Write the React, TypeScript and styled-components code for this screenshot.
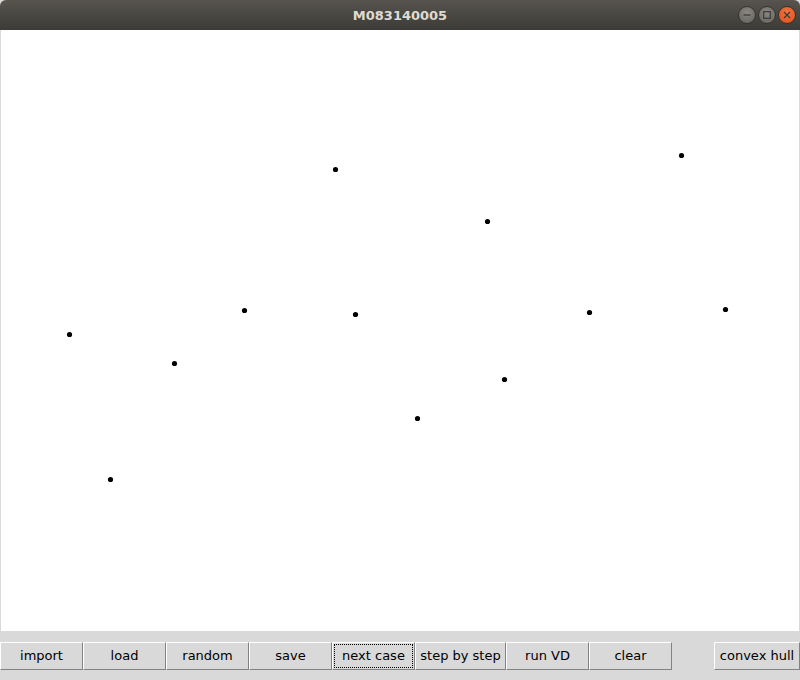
import styled, { createGlobalStyle } from 'styled-components';

const GlobalStyle = createGlobalStyle`
html, body {
  margin: 0;
  padding: 0;
  background: #d9d9d9;
}
`

const points: [number, number][] = [
  [335, 169], [681, 155], [487, 221], [69, 334], [244, 310], [355, 314],
  [589, 312], [725, 309], [174, 363], [504, 379], [417, 418], [110, 479],
]

const buttons = [
  { label: 'import', width: 83 },
  { label: 'load', width: 83 },
  { label: 'random', width: 83 },
  { label: 'save', width: 83 },
  { label: 'next case', width: 83, focused: true },
  { label: 'step by step', width: 91 },
  { label: 'run VD', width: 83 },
  { label: 'clear', width: 83 },
]

const App = () => {
  return (
    <Window>
      <GlobalStyle />
      <TitleBar>
        <Title>M083140005</Title>
        <Controls>
          <WinButton>
            <svg width="8" height="8" viewBox="0 0 8 8">
              <path d="M0.5 4 H7.5" stroke="#3c3b37" strokeWidth="1.3" />
            </svg>
          </WinButton>
          <WinButton>
            <svg width="8" height="8" viewBox="0 0 8 8">
              <rect x="0.7" y="0.7" width="6.6" height="6.6" fill="none" stroke="#3c3b37" strokeWidth="1.2" />
            </svg>
          </WinButton>
          <WinButton close>
            <svg width="8" height="8" viewBox="0 0 8 8">
              <path d="M1 1 L7 7 M7 1 L1 7" stroke="#3c3b37" strokeWidth="1.3" />
            </svg>
          </WinButton>
        </Controls>
      </TitleBar>
      <Canvas>
        <svg width="800" height="601" viewBox="0 30 800 601">
          {points.map(([x, y], i) => (
            <circle key={i} cx={x + 0.5} cy={y + 0.5} r={2.6} fill="#000" />
          ))}
        </svg>
      </Canvas>
      <ButtonBar>
        <ButtonGroup>
          {buttons.map((b) => (
            <TkButton key={b.label} width={b.width} focused={b.focused}>
              <span>{b.label}</span>
            </TkButton>
          ))}
        </ButtonGroup>
        <TkButton width={86}>
          <span>convex hull</span>
        </TkButton>
      </ButtonBar>
    </Window>
  )
}

export default App

const Window = styled.div`
width: 800px;
height: 680px;
display: flex;
flex-direction: column;
background: #d9d9d9;
overflow: hidden;
`

const TitleBar = styled.div`
height: 30px;
flex: 0 0 30px;
position: relative;
display: flex;
align-items: center;
justify-content: center;
background: linear-gradient(#57544e, #3c3b37);
border-radius: 6px 6px 0 0;
`

const Title = styled.div`
font-family: "DejaVu Sans", sans-serif;
font-weight: bold;
font-size: 13px;
color: #dfdbd2;
`

const Controls = styled.div`
position: absolute;
right: 4px;
top: 6px;
display: flex;
gap: 2px;
`

const WinButton = styled.div<{ close?: boolean }>`
width: 18px;
height: 18px;
border-radius: 50%;
display: flex;
align-items: center;
justify-content: center;
background: ${(p) => (p.close
    ? 'radial-gradient(circle at 50% 35%, #f2743f, #e04e1c)'
    : 'radial-gradient(circle at 50% 35%, #8a8781, #64625c)')};
border: 1px solid #34332f;
box-sizing: border-box;
`

const Canvas = styled.div`
flex: 0 0 601px;
height: 601px;
background: #ffffff;
box-sizing: border-box;
border-left: 1px solid #d9d9d9;
border-right: 1px solid #d9d9d9;
overflow: hidden;
svg {
  display: block;
  margin-left: -1px;
}
`

const ButtonBar = styled.div`
display: flex;
justify-content: space-between;
align-items: flex-start;
padding-top: 11px;
`

const ButtonGroup = styled.div`
display: flex;
`

const TkButton = styled.div<{ width: number; focused?: boolean }>`
width: ${(p) => p.width}px;
height: 28px;
box-sizing: border-box;
background: #d9d9d9;
border-top: 1px solid #ffffff;
border-left: 1px solid #ffffff;
border-right: 1px solid #828282;
border-bottom: 1px solid #828282;
padding: 1px;
font-family: "DejaVu Sans", sans-serif;
font-size: 13px;
color: #000;
span {
  display: flex;
  align-items: center;
  justify-content: center;
  height: 100%;
  padding-bottom: 2px;
  box-sizing: border-box;
  border: 1px dotted ${(p) => (p.focused ? '#000' : 'transparent')};
}
`
